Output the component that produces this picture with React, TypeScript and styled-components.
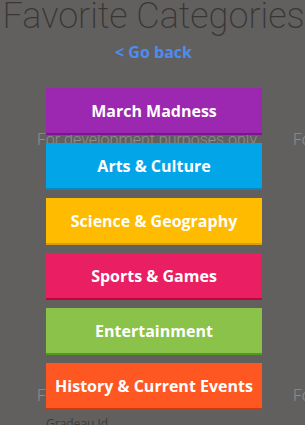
import styled, { createGlobalStyle } from 'styled-components'

type Category = {
  label: string
  color: string
  shade: string
}

const categories: Category[] = [
  { label: 'March Madness', color: '#9c27b0', shade: '#7b1492' },
  { label: 'Arts & Culture', color: '#03a5e9', shade: '#0b86c2' },
  { label: 'Science & Geography', color: '#ffbb00', shade: '#d99a16' },
  { label: 'Sports & Games', color: '#e91e63', shade: '#c0043f' },
  { label: 'Entertainment', color: '#8bc34a', shade: '#56981f' },
  { label: 'History & Current Events', color: '#ff5722', shade: '#d1380e' },
]

const GlobalStyle = createGlobalStyle`
  html, body {
    margin: 0;
    padding: 0;
    background: #62605e;
  }
`

const Page = styled.div`
  position: relative;
  width: 305px;
  height: 425px;
  overflow: hidden;
  background: #62605e;
`

const Underlay = styled.div`
  padding-top: 130px;
`

const NoteRow = styled.div<{ $spaced?: boolean }>`
  display: flex;
  padding-left: 37px;
  height: ${({ $spaced }) => ($spaced ? '256px' : 'auto')};
`

const Note = styled.div`
  flex: none;
  width: 256px;
  white-space: nowrap;
  font-family: Roboto, 'Liberation Sans', sans-serif;
  font-weight: 300;
  font-size: 16px;
  line-height: 19px;
  color: #8f8d8b;
`

const Field = styled.div`
  margin-top: 12px;
  padding-left: 46px;
`

const FieldLabel = styled.div`
  font-family: 'Open Sans', 'Liberation Sans', sans-serif;
  font-size: 12px;
  line-height: 14px;
  color: #3c3b3a;
`

const FieldInput = styled.div`
  margin-left: -28px;
  height: 30px;
  width: 260px;
  border: 1px solid #6e6c6a;
  border-radius: 10px;
`

const Overlay = styled.div`
  position: absolute;
  inset: 0;
  display: flex;
  flex-direction: column;
  align-items: center;
`

const Title = styled.h1`
  margin: -5px 0 0 2px;
  font-family: Roboto, 'Liberation Sans', sans-serif;
  font-weight: 200;
  font-size: 36px;
  line-height: 42px;
  color: #383736;
  white-space: nowrap;
`

const BackLink = styled.a`
  margin: 5px 0 0 2px;
  font-family: 'Open Sans', 'Liberation Sans', sans-serif;
  font-weight: 700;
  font-size: 16px;
  line-height: 21px;
  color: #4d8cf2;
  text-decoration: none;
  cursor: pointer;
`

const CategoryList = styled.div`
  display: flex;
  flex-direction: column;
  gap: 8px;
  margin: 25px 0 0 3px;
  width: 216px;
`

const CategoryButton = styled.button<{ $color: string; $shade: string }>`
  height: 47px;
  padding: 0;
  border: none;
  border-bottom: 2px solid ${({ $shade }) => $shade};
  background: ${({ $color }) => $color};
  color: #ffffff;
  font-family: 'Open Sans', 'Liberation Sans', sans-serif;
  font-weight: 700;
  font-size: 16px;
  white-space: nowrap;
  cursor: pointer;
`

const App = () => {
  return (
    <>
      <GlobalStyle />
      <Page>
        <Underlay>
          <NoteRow $spaced>
            <Note>For development purposes only</Note>
            <Note>For development purposes only</Note>
          </NoteRow>
          <NoteRow>
            <Note>For development purposes only</Note>
            <Note>For development purposes only</Note>
          </NoteRow>
          <Field>
            <FieldLabel>Gradeau Id</FieldLabel>
            <FieldInput />
          </Field>
        </Underlay>
        <Overlay>
          <Title>Favorite Categories</Title>
          <BackLink>&lt; Go back</BackLink>
          <CategoryList>
            {categories.map((category) => (
              <CategoryButton
                key={category.label}
                $color={category.color}
                $shade={category.shade}
              >
                {category.label}
              </CategoryButton>
            ))}
          </CategoryList>
        </Overlay>
      </Page>
    </>
  )
}

export default App
